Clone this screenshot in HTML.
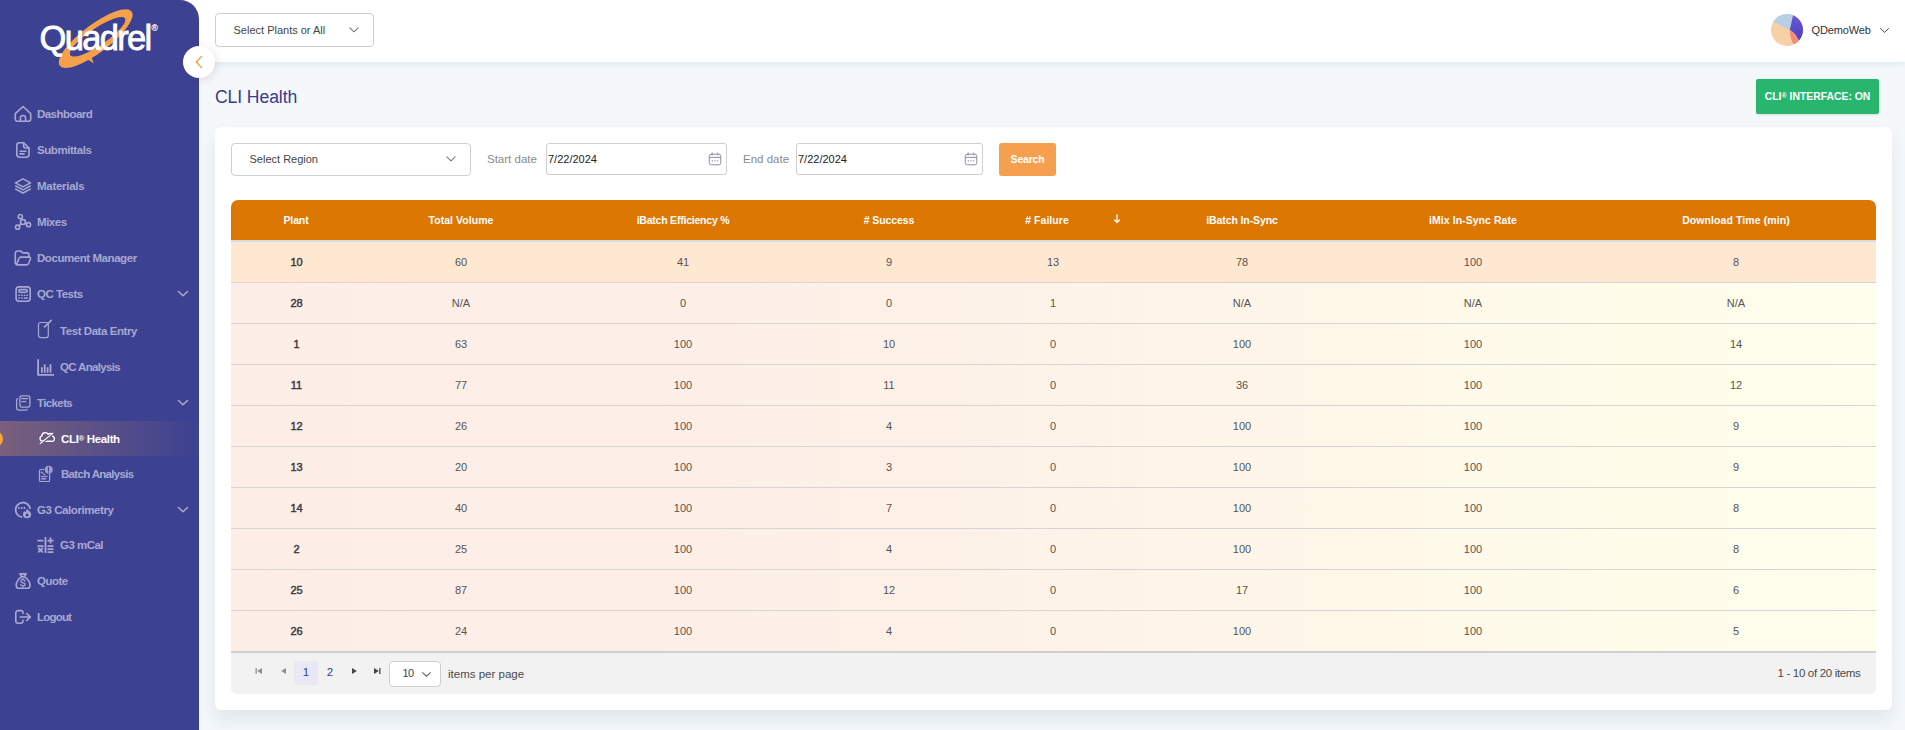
<!DOCTYPE html>
<html lang="en">
<head>
<meta charset="utf-8">
<title>CLI Health</title>
<style>
*{box-sizing:border-box;margin:0;padding:0}
html,body{width:1905px;height:730px;overflow:hidden}
body{font-family:"Liberation Sans",sans-serif;background:#f4f8fb;color:#444;position:relative}
.abs{position:absolute}
/* top bar */
#topbar{position:absolute;left:0;top:0;width:1905px;height:62px;background:#fff;box-shadow:0 2px 6px rgba(60,80,110,.10)}
/* sidebar */
#sidebar{position:absolute;left:0;top:0;width:199px;height:730px;background:#3d4191;border-top-right-radius:19px}
#toggle{position:absolute;left:183px;top:46px;width:32px;height:32px;border-radius:50%;background:#fff;box-shadow:2px 2px 8px rgba(80,60,40,.12)}
.mi{position:absolute;left:0;width:199px;height:36px;color:#a7a9d1;font-weight:bold;font-size:11.5px;letter-spacing:-.35px}
.mi span{position:absolute;left:37px;top:50%;transform:translateY(-50%);white-space:nowrap}
.mi.sub span{left:60px}
.mi svg{position:absolute}
.mi.active{color:#fff;background:linear-gradient(90deg,rgba(245,160,80,.33) 0,rgba(245,160,80,.16) 50%,rgba(245,160,80,0) 100%)}
.sel{position:absolute;background:#fff;border:1px solid #cfcfcf;border-radius:4px;font-size:11px;color:#444}
.sel span{position:absolute;top:50%;transform:translateY(-50%);white-space:nowrap}
.lbl{position:absolute;font-size:11.5px;color:#8a8a8a;white-space:nowrap}
#card{position:absolute;left:215px;top:127px;width:1677px;height:583px;background:#fff;border-radius:6px;box-shadow:0 10px 18px rgba(70,90,120,.11)}
#thead{position:absolute;left:231px;top:200px;width:1645px;height:40px;background:#dd7703;border-radius:7px 7px 0 0}
#thead div{position:absolute;top:0;height:40px;line-height:40px;color:#fff;font-weight:bold;font-size:10.5px;text-align:center;white-space:nowrap;transform:translateX(-50%);letter-spacing:-.2px}
.row{position:absolute;left:231px;width:1645px;height:41px;background:linear-gradient(90deg,#fdede7 0,#fdf0e7 38%,#fef6e8 64%,#fffcea 85%,#fffdec 100%);border-top:1px solid #d5d5d5}
.row div{position:absolute;top:0;height:40px;line-height:41px;font-size:11px;color:#555;text-align:center;transform:translateX(-50%);white-space:nowrap}
.row div.b{font-weight:normal;color:#3c3c3c;-webkit-text-stroke:.45px #3c3c3c;margin-left:.5px}
#pager{position:absolute;left:231px;top:651px;width:1645px;height:43px;background:#f2f2f2;border-top:2px solid #cfcfcf;border-radius:0 0 6px 6px}
</style>
</head>
<body>
<div id="topbar"></div>
<div id="sidebar">
<svg class="abs" style="left:30px;top:0px" width="140" height="80" viewBox="0 0 140 80">
  <path fill="#f5a04a" fill-rule="evenodd" transform="translate(65.7,38.6) rotate(-37)" d="M-45,0 A45,14 0 1 1 45,0 A45,14 0 1 1 -45,0 Z"/>
  <ellipse fill="#3d4191" cx="0" cy="0" rx="33" ry="8.6" transform="translate(67.6,36.8) rotate(-34)"/>
  <path fill="#f5a04a" d="M55.5,58 L59.6,52.2 L63.8,63.6 Z"/>
  <path fill="#3d4191" d="M60.2,53 L64,50.5 L70,57.5 L63.6,63 Z" opacity="0"/>
  <text x="9.6" y="50.3" font-family="Liberation Sans, sans-serif" font-size="34.5" fill="#fff" stroke="#fff" stroke-width=".8" textLength="112.6" lengthAdjust="spacing">Quadrel</text>
  <text x="121.6" y="31.4" font-family="Liberation Sans, sans-serif" font-size="8.5" fill="#fff" stroke="#fff" stroke-width=".2">®</text>
</svg>

<div class="mi" style="top:96px"><svg style="left:14px;top:9px" width="18" height="18" viewBox="0 0 18 18" fill="none" stroke="#a7a9d1" stroke-width="1.6" stroke-linejoin="round" stroke-linecap="round"><path d="M1.3 8.6 L9 1.5 L16.7 8.6 V14.3 a1.9 1.9 0 0 1 -1.9 1.9 H3.2 a1.9 1.9 0 0 1 -1.9 -1.9 Z"/><path d="M6.4 16 V13.1 a2.6 2.6 0 0 1 5.2 0 V16"/></svg><span style="letter-spacing:-0.54px">Dashboard</span></div>

<div class="mi" style="top:132px"><svg style="left:14px;top:9px" width="18" height="18" viewBox="0 0 18 18" fill="none" stroke="#a7a9d1" stroke-width="1.6" stroke-linejoin="round" stroke-linecap="round"><path d="M5.4 1.8 H9.6 L15 7 V13.6 a2.6 2.6 0 0 1 -2.6 2.6 H5.4 A2.6 2.6 0 0 1 2.8 13.6 V4.4 A2.6 2.6 0 0 1 5.4 1.8 Z"/><path d="M9.6 2 V5 a2 2 0 0 0 2 2 H15"/><path d="M6 10.2 H12 M6 12.9 H10"/></svg><span style="letter-spacing:-0.44px">Submittals</span></div>

<div class="mi" style="top:168px"><svg style="left:14px;top:9px" width="18" height="18" viewBox="0 0 18 18" fill="none" stroke="#a7a9d1" stroke-width="1.6" stroke-linejoin="round" stroke-linecap="round"><path d="M9 1.9 L16.5 5.9 L9 9.9 L1.5 5.9 Z"/><path d="M1.7 9 L9 12.9 L16.3 9"/><path d="M1.7 12.1 L9 16 L16.3 12.1"/></svg><span style="letter-spacing:-0.29px">Materials</span></div>

<div class="mi" style="top:204px"><svg style="left:14px;top:9px" width="18" height="18" viewBox="0 0 18 18" fill="none" stroke="#a7a9d1" stroke-width="1.6" stroke-linejoin="round" stroke-linecap="round"><circle cx="9" cy="9" r="2.5"/><circle cx="6.3" cy="3.6" r="2.1"/><circle cx="3.6" cy="14.2" r="2.1"/><circle cx="14.5" cy="11.7" r="2.1"/><path d="M7.2 5.4 L7.9 6.8 M7.2 10.8 L5 12.8 M11.3 10 L12.7 10.8"/></svg><span style="letter-spacing:-0.45px">Mixes</span></div>

<div class="mi" style="top:240px"><svg style="left:14px;top:9px" width="18" height="18" viewBox="0 0 18 18" fill="none" stroke="#a7a9d1" stroke-width="1.6" stroke-linejoin="round" stroke-linecap="round"><path d="M1.3 13.8 V4.2 a2.2 2.2 0 0 1 2.2 -2.2 H6.6 L9 3.9 H12.8 a2.2 2.2 0 0 1 2.2 2.2 V8"/><path d="M1.3 13.8 a2.1 2.1 0 0 0 2.1 2.1 H12.4 a2.4 2.4 0 0 0 2.3 -1.7 L16.5 9.8 a1.3 1.3 0 0 0 -1.2 -1.7 H6.8 a2 2 0 0 0 -1.9 1.4 L2.6 15.6"/></svg><span style="letter-spacing:-0.44px">Document Manager</span></div>

<div class="mi" style="top:276px"><svg style="left:14px;top:9px" width="18" height="18" viewBox="0 0 18 18" fill="none" stroke="#a7a9d1" stroke-width="1.6" stroke-linejoin="round" stroke-linecap="round"><rect x="2.1" y="1.9" width="14.1" height="14.4" rx="3"/><rect x="4.9" y="4.6" width="8.4" height="2.7" rx="1.35"/><path d="M5 10.2 h.5 M7.7 10.2 h.5 M10.4 10.2 h.5 M13 10.2 h.3 M5 13 h.5 M7.7 13 h.5 M10.4 13 h2.9" stroke-width="1.5"/></svg><span style="letter-spacing:-0.49px">QC Tests</span><svg style="left:177px;top:14px" width="12" height="8" viewBox="0 0 12 8" fill="none" stroke="#a7a9d1" stroke-width="1.5" stroke-linecap="round" stroke-linejoin="round"><path d="M1.5 1.5 L6 5.8 L10.5 1.5"/></svg></div>

<div class="mi sub" style="top:313px"><svg style="left:36px;top:6px" width="18" height="20" viewBox="0 0 18 20" fill="none" stroke="#a7a9d1" stroke-width="1.2" stroke-linejoin="round" stroke-linecap="round"><rect x="2.5" y="3.5" width="9.8" height="15.1" rx="2" stroke-width="1.2"/><path d="M8.6 7.8 L15.2 1.4" stroke-width="1.7"/></svg><span style="letter-spacing:-0.44px">Test Data Entry</span></div>

<div class="mi sub" style="top:349px"><svg style="left:36px;top:9.8px" width="18" height="18" viewBox="0 0 18 18" fill="none" stroke="#a7a9d1" stroke-width="1.6" stroke-linecap="round"><path d="M2.1 0.9 V15.8 H17.6" stroke-width="1.8"/><path d="M5.9 13.8 V8.2 M8.7 13.8 V5.2 M11.6 13.8 V8.2 M14.5 13.8 V5.2" stroke-width="1.8" stroke-linecap="butt"/></svg><span style="letter-spacing:-0.67px">QC Analysis</span></div>

<div class="mi" style="top:385px"><svg style="left:14px;top:9px" width="18" height="18" viewBox="0 0 18 18" fill="none" stroke="#a7a9d1" stroke-width="1.25" stroke-linejoin="round" stroke-linecap="round"><rect x="5.9" y="1.8" width="10" height="11.4" rx="2.2"/><path d="M7.8 4.6 H13.8 M7.8 7.6 H11.8"/><path d="M3.6 4.6 a2 2 0 0 0 -1 1.8 V13.8 a2.4 2.4 0 0 0 2.4 2.4 H11.4 a2 2 0 0 0 1.8 -1"/></svg><span style="letter-spacing:-0.61px">Tickets</span><svg style="left:177px;top:14px" width="12" height="8" viewBox="0 0 12 8" fill="none" stroke="#a7a9d1" stroke-width="1.5" stroke-linecap="round" stroke-linejoin="round"><path d="M1.5 1.5 L6 5.8 L10.5 1.5"/></svg></div>

<div class="mi sub active" style="top:421px;height:35px"><div class="abs" style="left:-13px;top:10px;width:16px;height:16px;border-radius:50%;background:#f7a340"></div><svg style="left:37.5px;top:10.3px" width="17" height="15.1" viewBox="0 0 18 16" fill="none" stroke="#fff" stroke-width="1.45" stroke-linejoin="round" stroke-linecap="round"><path d="M4.6 10.9 A3 3 0 0 1 4.1 5.1 A3.6 3.6 0 0 1 10.8 3.5 A2.7 2.7 0 0 1 15.5 5.8 A2.6 2.6 0 0 1 13.8 10.9 Z"/><path d="M3.3 13.9 L16.2 3.1" stroke="#625990" stroke-width="1.5" stroke-linecap="butt"/><path d="M2.3 13.4 L15.7 2.2" stroke-width="1.2"/></svg><span style="left:61px">CLI<sup style="font-size:8px;vertical-align:2.5px;line-height:0;letter-spacing:-.5px">®</sup> Health</span></div>

<div class="mi sub" style="top:456px"><svg style="left:37px;top:8px" width="18" height="20" viewBox="0 0 18 20" fill="none" stroke="#a7a9d1" stroke-width="1.2" stroke-linejoin="round" stroke-linecap="round"><rect x="2.5" y="5.5" width="10.1" height="12" rx="1.3"/><path d="M4.7 8.4 L7.5 10.6" stroke-width="1"/><circle cx="4.7" cy="8.4" r=".8" fill="#a7a9d1" stroke="none"/><circle cx="7.5" cy="10.6" r=".8" fill="#a7a9d1" stroke="none"/><path d="M4.4 12.4 H10.4" stroke-width=".9"/><rect x="4.2" y="13.7" width="5" height="2" fill="#a7a9d1" stroke="none" opacity=".8"/><circle cx="11.75" cy="5.7" r="4.3" fill="#3d4191" stroke="none"/><circle cx="11.75" cy="5.7" r="4" fill="#9c9eca" stroke="none"/><path d="M11.5 3.2 V6.8 M11.5 8 v.2" stroke="#3d4191" stroke-width="1.1"/></svg><span style="left:61px;letter-spacing:-0.68px">Batch Analysis</span></div>

<div class="mi" style="top:492px"><svg style="left:14px;top:9px" width="18" height="18" viewBox="0 0 18 18" fill="none" stroke="#a7a9d1" stroke-width="1.8" stroke-linejoin="round" stroke-linecap="round"><path d="M8.3 16.1 A7.3 7.3 0 1 1 16.15 7.9" stroke-linecap="butt"/><path d="M4.9 6 v1.9 M7.7 6 v1.9 M10.4 6 v1.9" stroke-width="1.5" stroke-linecap="butt"/><path d="M13.1 7.9 C14.2 9.6 17.2 10.7 17.2 13.2 a4.1 4.1 0 0 1 -8.2 0 C9 11.7 9.7 10.7 10.6 10 C10.9 10.8 11.4 11.2 11.9 11.2 C11.9 9.8 12.3 8.8 13.1 7.9 Z" fill="#a7a9d1" stroke="none"/><path d="M13.1 11.9 c.5 .8 1.5 1.1 1.5 2.1 a1.5 1.5 0 0 1 -3 0 c0 -.6 .3 -1 .6 -1.3 c.1 .3 .3 .5 .5 .5 c0 -.5 .1 -.9 .4 -1.3 Z" fill="#3d4191" stroke="none"/></svg><span style="letter-spacing:-0.43px">G3 Calorimetry</span><svg style="left:177px;top:14px" width="12" height="8" viewBox="0 0 12 8" fill="none" stroke="#a7a9d1" stroke-width="1.5" stroke-linecap="round" stroke-linejoin="round"><path d="M1.5 1.5 L6 5.8 L10.5 1.5"/></svg></div>

<div class="mi sub" style="top:527px"><svg style="left:36px;top:9px" width="19" height="18" viewBox="0 0 19 18" fill="none" stroke="#a7a9d1" stroke-width="1.8" stroke-linecap="butt"><path d="M9.5 1 V17"/><path d="M1.5 4.6 H7.5 M11.5 4.6 H17.5 M14.5 1.6 V7.6 M1.5 10.2 H7.5"/><path d="M2.2 12 L6.8 16.4 M6.8 12 L2.2 16.4"/><path d="M11.5 10.2 H17.5 M11.5 13.2 H17.5 M11.5 16.2 H17.5"/></svg><span style="letter-spacing:-0.53px">G3 mCal</span></div>

<div class="mi" style="top:563px"><svg style="left:14px;top:9px" width="18" height="18" viewBox="0 0 18 18" fill="none" stroke="#a7a9d1" stroke-width="1.6" stroke-linejoin="round" stroke-linecap="round"><path d="M5.8 1.9 H12.2 L10.3 4.6 H7.7 Z"/><path d="M7.7 4.6 C4.6 6.8 2.2 10.2 2.2 13.2 C2.2 15.2 3.4 16.3 5 16.3 H13.2 C14.8 16.3 16 15.2 16 13.2 C16 10.2 13.6 6.8 10.3 4.6"/><path d="M11 9 C10.6 8 9.8 7.7 8.9 7.7 C7.6 7.7 6.8 8.4 6.8 9.2 C6.8 11.3 11.1 10.3 11.1 12.3 C11.1 13.3 10.2 13.9 8.9 13.9 C7.8 13.9 7 13.5 6.6 12.6 M8.9 6.5 V7.7 M8.9 13.9 V15.2" stroke-width="1.3"/></svg><span style="letter-spacing:-0.51px">Quote</span></div>

<div class="mi" style="top:599px"><svg style="left:14px;top:9px" width="18" height="18" viewBox="0 0 18 18" fill="none" stroke="#a7a9d1" stroke-width="1.6" stroke-linejoin="round" stroke-linecap="round"><path d="M9 5.4 V4.8 a2.2 2.2 0 0 0 -2.2 -2.2 H4 A2.2 2.2 0 0 0 1.8 4.8 V13 A2.2 2.2 0 0 0 4 15.2 H6.8 A2.2 2.2 0 0 0 9 13 V12.4"/><path d="M6.2 9 H16.2 M12.8 5.6 L16.4 9 L12.8 12.4"/></svg><span style="letter-spacing:-0.80px">Logout</span></div>
</div>
<div id="toggle"><svg class="abs" style="left:11px;top:9px" width="10" height="14" viewBox="0 0 10 14" fill="none" stroke="#f39a3c" stroke-width="1.3" stroke-linecap="round" stroke-linejoin="round"><path d="M7.6 1.4 L2.2 7 L7.6 12.6"/></svg></div>
<!-- topbar contents -->
<div class="sel" style="left:215px;top:13px;width:159px;height:34px"><span style="left:17.5px">Select Plants or All</span><svg class="abs" style="left:132px;top:12px" width="12" height="8" viewBox="0 0 12 8" fill="none" stroke="#777" stroke-width="1.05" stroke-linecap="round" stroke-linejoin="round"><path d="M1.9 1.9 L6 5.8 L10.1 1.9"/></svg></div>
<svg class="abs" style="left:1770px;top:13px" width="34" height="34" viewBox="0 0 34 34">
  <defs><clipPath id="av"><circle cx="17" cy="17" r="16"/></clipPath><linearGradient id="avb" x1="0" y1="0" x2="0" y2="1"><stop offset="0" stop-color="#6a5ad8"/><stop offset="1" stop-color="#4b3fc0"/></linearGradient></defs>
  <g clip-path="url(#av)">
    <rect width="34" height="34" fill="#f7d0a8"/>
    <path d="M2,8 L20,17 L26,-2 L0,-2 Z" fill="#b7cfe4"/>
    <path d="M23.5,0 L19.8,17 C24,19 27,23 29.5,29 L36,29 L36,0 Z" fill="url(#avb)"/>
    <path d="M19.8,17 C24,19.5 27,23.5 29.2,28.5 L24.5,33 C21.5,28 19.8,23 19.8,17 Z" fill="#f68d72"/>
  </g>
</svg>
<div class="abs" style="left:1811.6px;top:23.5px;font-size:11px;color:#333;letter-spacing:-.15px;white-space:nowrap">QDemoWeb</div>
<svg class="abs" style="left:1879px;top:26.5px" width="11" height="8" viewBox="0 0 11 8" fill="none" stroke="#444" stroke-width="1" stroke-linecap="round" stroke-linejoin="round"><path d="M1.5 1.5 L5.5 5.3 L9.5 1.5"/></svg>

<!-- heading -->
<div class="abs" id="title" style="left:215px;top:87px;font-size:17.6px;color:#3b3a8c;white-space:nowrap;letter-spacing:-.1px">CLI Health</div>
<div class="abs" id="cli" style="left:1756px;top:79px;width:123px;height:35px;background:#28b66f;border-radius:2px;color:#fff;font-weight:bold;font-size:10.4px;line-height:36px;text-align:center;white-space:nowrap;letter-spacing:0px;box-shadow:0 1px 2px rgba(0,0,0,.12)">CLI<sup style="font-size:7px;vertical-align:2.5px;line-height:0">®</sup> INTERFACE: ON</div>
<div id="card"></div>
<!-- filters -->
<div class="sel" style="left:231px;top:143px;width:240px;height:33px"><span style="left:17.5px;top:15px">Select Region</span><svg class="abs" style="left:213px;top:11px" width="12" height="8" viewBox="0 0 12 8" fill="none" stroke="#777" stroke-width="1.05" stroke-linecap="round" stroke-linejoin="round"><path d="M1.9 1.9 L6 5.8 L10.1 1.9"/></svg></div>
<div class="lbl" style="left:487px;top:153px">Start date</div>
<div class="sel" style="left:546px;top:143px;width:181px;height:32px;border-radius:3px;color:#222"><span style="left:1px">7/22/2024</span><svg class="abs" style="left:161px;top:7.8px" width="14" height="14" viewBox="0 0 14 14" fill="none" stroke="#8c8fa8" stroke-width="1" stroke-linecap="round" stroke-linejoin="round"><rect x="1.2" y="2.2" width="11.6" height="10.6" rx="2.2"/><path d="M1.4 5.4 H12.6 M4.2 1 V3 M9.8 1 V3"/><path d="M4.3 8.8 h.2 M6.9 8.8 h.2 M9.5 8.8 h.2" stroke-width="1.3"/></svg></div>
<div class="lbl" style="left:743px;top:153px">End date</div>
<div class="sel" style="left:796px;top:143px;width:187px;height:32px;border-radius:3px;color:#222"><span style="left:1px">7/22/2024</span><svg class="abs" style="left:167px;top:7.8px" width="14" height="14" viewBox="0 0 14 14" fill="none" stroke="#8c8fa8" stroke-width="1" stroke-linecap="round" stroke-linejoin="round"><rect x="1.2" y="2.2" width="11.6" height="10.6" rx="2.2"/><path d="M1.4 5.4 H12.6 M4.2 1 V3 M9.8 1 V3"/><path d="M4.3 8.8 h.2 M6.9 8.8 h.2 M9.5 8.8 h.2" stroke-width="1.3"/></svg></div>
<div class="abs" id="search" style="left:999px;top:143px;width:57px;height:33px;background:#f5a04e;border-radius:3px;color:#fff;font-weight:bold;font-size:10.5px;line-height:33px;text-align:center;letter-spacing:-.2px">Search</div>
<!-- table -->
<div id="thead">
<div style="left:65px;letter-spacing:-0.12px">Plant</div>
<div style="left:230px;letter-spacing:0.05px">Total Volume</div>
<div style="left:452px;letter-spacing:-0.22px">iBatch Efficiency %</div>
<div style="left:658px;letter-spacing:-0.11px"># Success</div>
<div style="left:816px;letter-spacing:0.04px"># Failure</div>
<div style="left:1011px;letter-spacing:-0.11px">iBatch In-Sync</div>
<div style="left:1242px;letter-spacing:0.05px">iMix In-Sync Rate</div>
<div style="left:1505px;letter-spacing:0.09px">Download Time (min)</div>
<svg class="abs" style="left:881.8px;top:14px" width="8" height="10" viewBox="0 0 8 10" fill="none" stroke="#fff" stroke-width="1.3" stroke-linecap="round" stroke-linejoin="round"><path d="M4 1 V8.4 M1.6 6 L4 8.6 L6.4 6"/></svg>
</div>
<div class="row" style="top:241px;background:#fee8d2;border-top:2px solid #d8dbe2;top:240px;height:42px">
<div class="b" style="left:65px">10</div>
<div style="left:230px">60</div>
<div style="left:452px">41</div>
<div style="left:658px">9</div>
<div style="left:822px">13</div>
<div style="left:1011px">78</div>
<div style="left:1242px">100</div>
<div style="left:1505px">8</div>
</div>
<div class="row" style="top:282px">
<div class="b" style="left:65px">28</div>
<div style="left:230px">N/A</div>
<div style="left:452px">0</div>
<div style="left:658px">0</div>
<div style="left:822px">1</div>
<div style="left:1011px">N/A</div>
<div style="left:1242px">N/A</div>
<div style="left:1505px">N/A</div>
</div>
<div class="row" style="top:323px">
<div class="b" style="left:65px">1</div>
<div style="left:230px">63</div>
<div style="left:452px">100</div>
<div style="left:658px">10</div>
<div style="left:822px">0</div>
<div style="left:1011px">100</div>
<div style="left:1242px">100</div>
<div style="left:1505px">14</div>
</div>
<div class="row" style="top:364px">
<div class="b" style="left:65px">11</div>
<div style="left:230px">77</div>
<div style="left:452px">100</div>
<div style="left:658px">11</div>
<div style="left:822px">0</div>
<div style="left:1011px">36</div>
<div style="left:1242px">100</div>
<div style="left:1505px">12</div>
</div>
<div class="row" style="top:405px">
<div class="b" style="left:65px">12</div>
<div style="left:230px">26</div>
<div style="left:452px">100</div>
<div style="left:658px">4</div>
<div style="left:822px">0</div>
<div style="left:1011px">100</div>
<div style="left:1242px">100</div>
<div style="left:1505px">9</div>
</div>
<div class="row" style="top:446px">
<div class="b" style="left:65px">13</div>
<div style="left:230px">20</div>
<div style="left:452px">100</div>
<div style="left:658px">3</div>
<div style="left:822px">0</div>
<div style="left:1011px">100</div>
<div style="left:1242px">100</div>
<div style="left:1505px">9</div>
</div>
<div class="row" style="top:487px">
<div class="b" style="left:65px">14</div>
<div style="left:230px">40</div>
<div style="left:452px">100</div>
<div style="left:658px">7</div>
<div style="left:822px">0</div>
<div style="left:1011px">100</div>
<div style="left:1242px">100</div>
<div style="left:1505px">8</div>
</div>
<div class="row" style="top:528px">
<div class="b" style="left:65px">2</div>
<div style="left:230px">25</div>
<div style="left:452px">100</div>
<div style="left:658px">4</div>
<div style="left:822px">0</div>
<div style="left:1011px">100</div>
<div style="left:1242px">100</div>
<div style="left:1505px">8</div>
</div>
<div class="row" style="top:569px">
<div class="b" style="left:65px">25</div>
<div style="left:230px">87</div>
<div style="left:452px">100</div>
<div style="left:658px">12</div>
<div style="left:822px">0</div>
<div style="left:1011px">17</div>
<div style="left:1242px">100</div>
<div style="left:1505px">6</div>
</div>
<div class="row" style="top:610px">
<div class="b" style="left:65px">26</div>
<div style="left:230px">24</div>
<div style="left:452px">100</div>
<div style="left:658px">4</div>
<div style="left:822px">0</div>
<div style="left:1011px">100</div>
<div style="left:1242px">100</div>
<div style="left:1505px">5</div>
</div>
<!-- pager -->
<div id="pager">
<svg class="abs" style="left:24px;top:14px" width="8" height="8" viewBox="0 0 8 8"><rect x="0.5" y="1" width="1.3" height="6" fill="#8e8e8e"/><path d="M7 1 L2.2 4 L7 7 Z" fill="#8e8e8e"/></svg>
<svg class="abs" style="left:49px;top:14px" width="8" height="8" viewBox="0 0 8 8"><path d="M6 1 L1.2 4 L6 7 Z" fill="#8e8e8e"/></svg>
<div class="abs" style="left:63px;top:8px;width:24px;height:24px;background:#e9e9f6;border-radius:3px;color:#3b3a8c;font-size:11.5px;line-height:22px;text-align:center">1</div>
<div class="abs" style="left:87px;top:8px;width:24px;height:24px;color:#3b3a8c;font-size:11.5px;line-height:22px;text-align:center">2</div>
<svg class="abs" style="left:118.5px;top:14px" width="8" height="8" viewBox="0 0 8 8"><path d="M2 1 L6.8 4 L2 7 Z" fill="#444"/></svg>
<svg class="abs" style="left:141.5px;top:14px" width="8" height="8" viewBox="0 0 8 8"><path d="M1 1 L5.8 4 L1 7 Z" fill="#444"/><rect x="6.2" y="1" width="1.3" height="6" fill="#444"/></svg>
<div class="sel" style="left:158px;top:8px;width:52px;height:26px"><span style="left:12.5px;top:10.7px;letter-spacing:-.6px">10</span><svg class="abs" style="left:31px;top:8.5px" width="11" height="7" viewBox="0 0 12 8" fill="none" stroke="#666" stroke-width="1.2" stroke-linecap="round" stroke-linejoin="round"><path d="M1.5 1.8 L6 6 L10.5 1.8"/></svg></div>
<div class="abs" style="left:217px;top:15px;font-size:11.5px;color:#4a4a4a;white-space:nowrap">items per page</div>
<div class="abs" style="right:15.5px;top:14px;font-size:11.5px;color:#4a4a4a;white-space:nowrap;letter-spacing:-.33px">1 - 10 of 20 items</div>
</div>
</body>
</html>
